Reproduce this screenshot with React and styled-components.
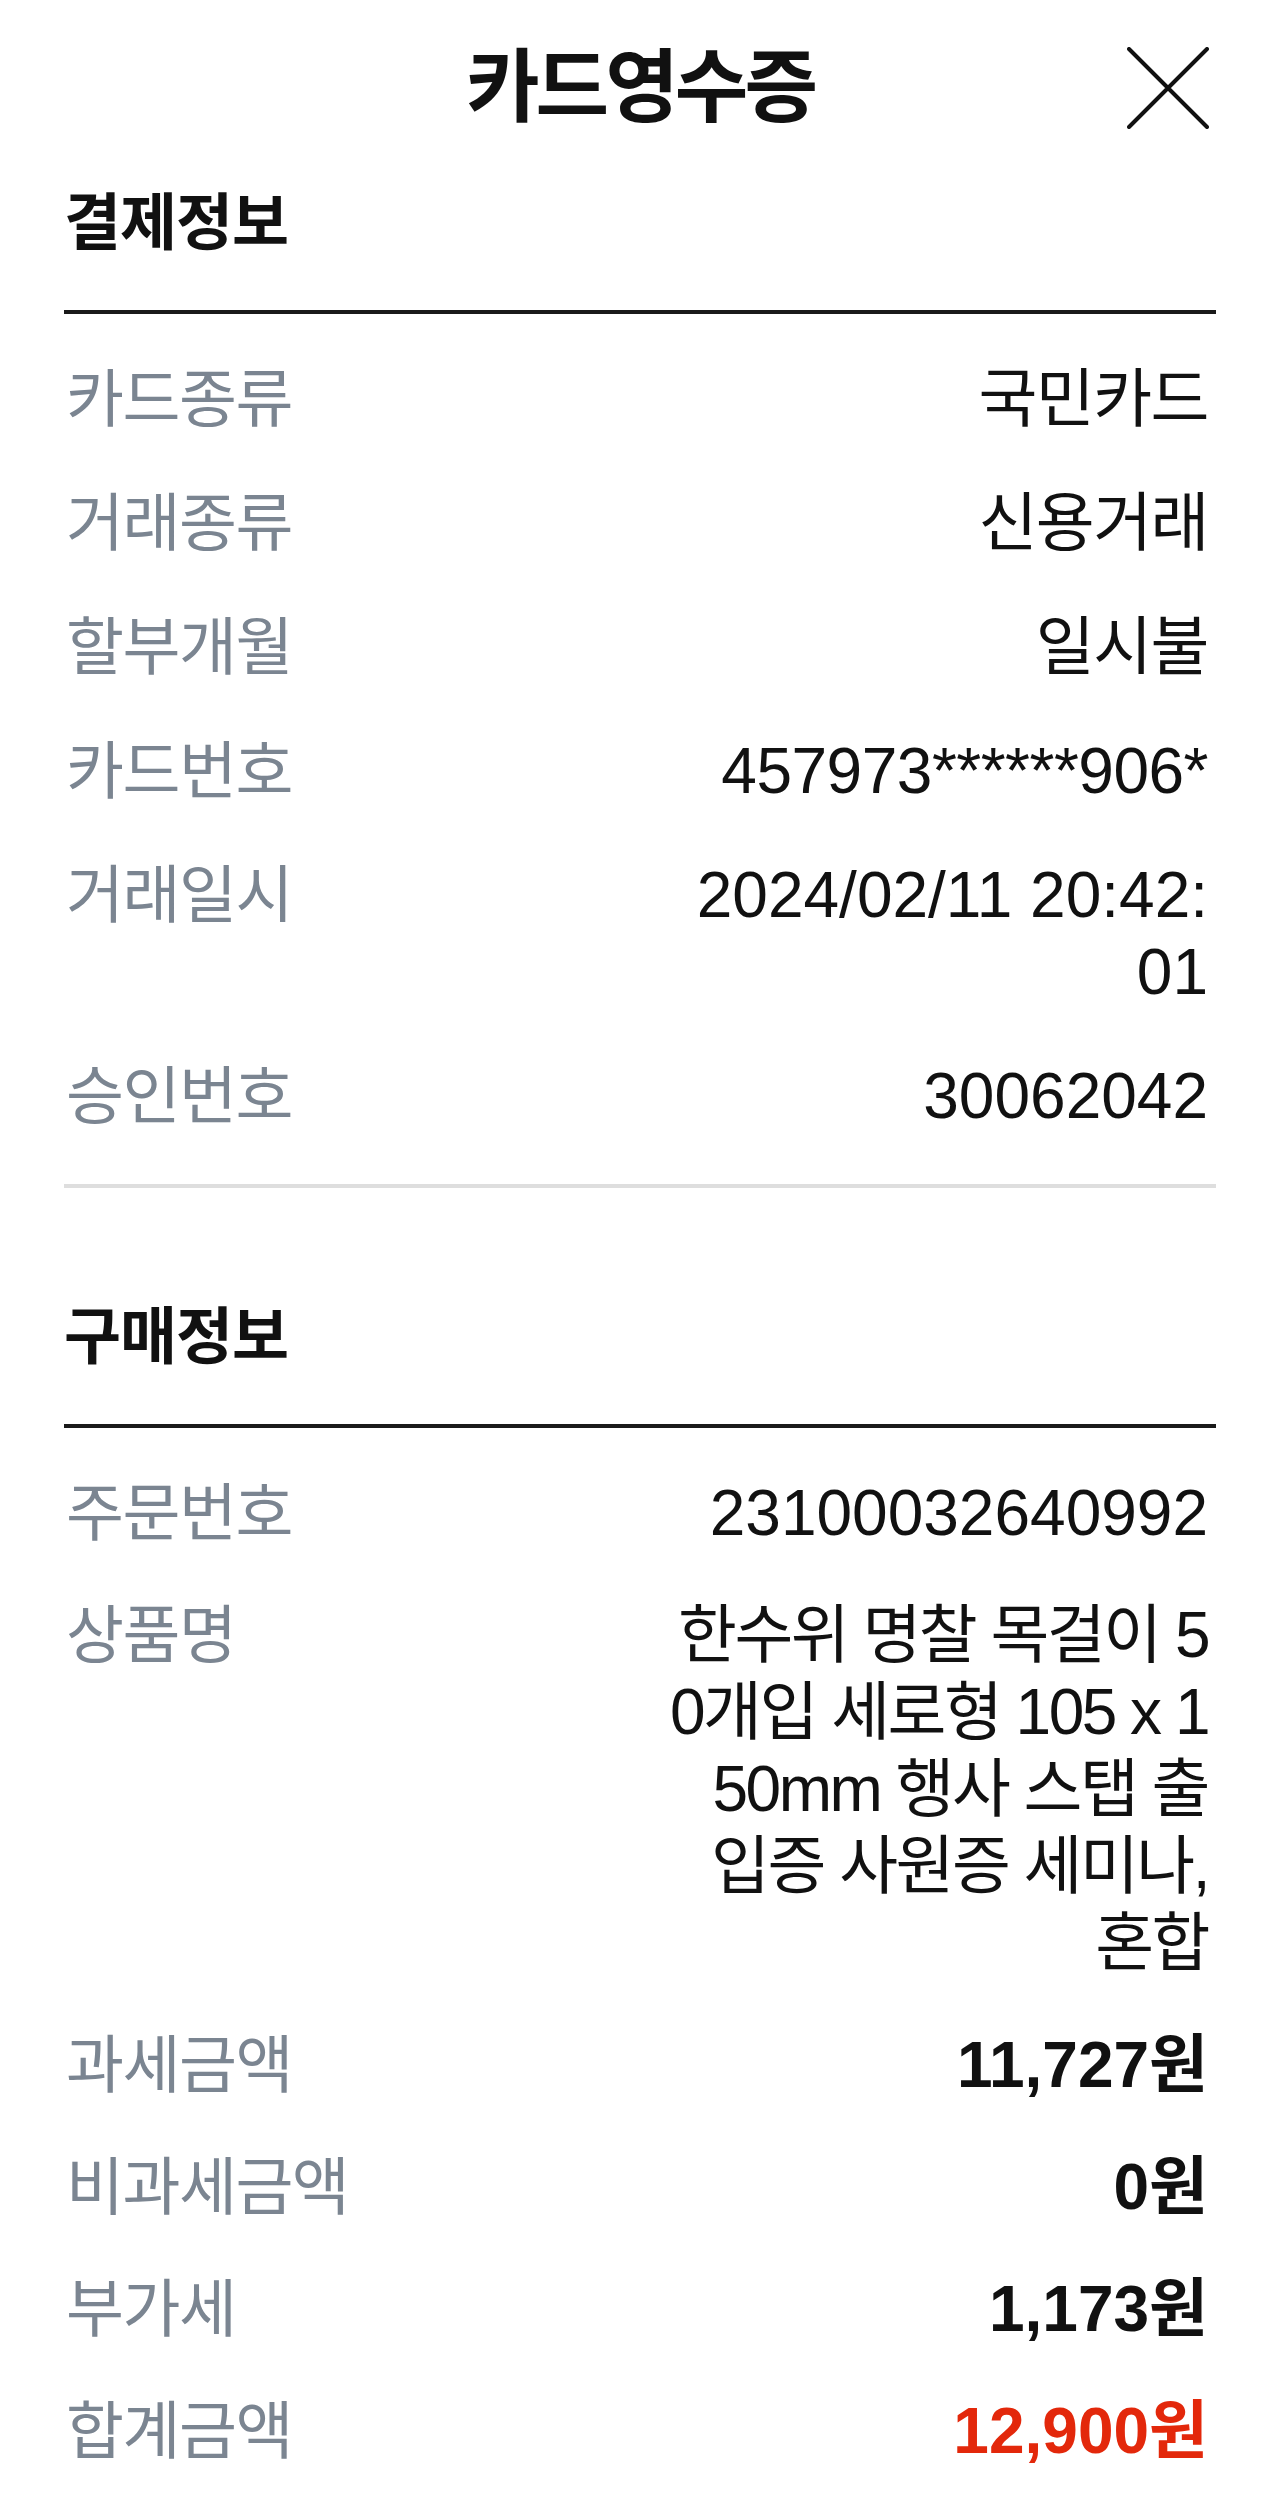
import React from "react";
import styled, { createGlobalStyle } from "styled-components";

const GlobalStyle = createGlobalStyle`
  html, body {
    margin: 0;
    padding: 0;
    background: #ffffff;
  }
  body {
    font-family: "Liberation Sans", "Noto Sans CJK KR", sans-serif;
    color: #111111;
    -webkit-font-smoothing: antialiased;
  }
  * { box-sizing: border-box; }
`;

const Page = styled.div`
  width: 1280px;
  min-height: 2520px;
  background: #ffffff;
  padding: 0 64px;
  display: flex;
  flex-direction: column;
`;

const Header = styled.header`
  height: 176px;
  display: grid;
  grid-template-columns: 1fr auto 1fr;
  align-items: center;
`;

const Title = styled.h1`
  grid-column: 2;
  margin: 0;
  font-size: 80px;
  line-height: 96px;
  font-weight: 700;
  letter-spacing: -4px;
  color: #111111;
`;

const CloseButton = styled.button`
  grid-column: 3;
  justify-self: end;
  width: 82px;
  height: 82px;
  margin-right: 7px;
  padding: 0;
  border: 0;
  background: transparent;
  display: flex;
  align-items: center;
  justify-content: center;
  cursor: pointer;
`;

const Section = styled.section`
  display: flex;
  flex-direction: column;
  margin-top: ${(p) => p.$top}px;
  border-bottom: ${(p) => (p.$divider ? "4px solid #dedede" : "none")};
`;

const SectionTitle = styled.h2`
  margin: 0;
  padding-bottom: 48px;
  border-bottom: 4px solid #1a1a1a;
  font-size: 62px;
  line-height: 77px;
  font-weight: 700;
  letter-spacing: -1px;
  color: #111111;
`;

const List = styled.dl`
  margin: 0;
  padding: 47px 8px ${(p) => p.$bottom}px 2px;
  display: flex;
  flex-direction: column;
  gap: ${(p) => p.$gap}px;
`;

const Row = styled.div`
  display: flex;
  justify-content: space-between;
  align-items: flex-start;
  gap: 40px;
`;

const Label = styled.dt`
  flex: none;
  margin: 0;
  font-size: 63px;
  line-height: 77px;
  letter-spacing: -1.5px;
  color: #7b8591;
  white-space: nowrap;
`;

const Value = styled.dd`
  margin: 0;
  text-align: right;
  font-size: 64px;
  line-height: 77px;
  font-weight: ${(p) => (p.$bold ? 700 : 400)};
  letter-spacing: ${(p) => p.$ls || 0}px;
  color: ${(p) => (p.$accent ? "#e3280b" : "#111111")};
`;

const Line = styled.span`
  display: block;
`;

const CloseIcon = () => (
  <svg width="82" height="82" viewBox="0 0 82 82" fill="none">
    <path d="M2 2 L80 80 M80 2 L2 80" stroke="#111111" strokeWidth="4" strokeLinecap="round" />
  </svg>
);

const paymentRows = [
  { label: "카드종류", lines: ["국민카드"], ls: -1.5 },
  { label: "거래종류", lines: ["신용거래"], ls: -1.5 },
  { label: "할부개월", lines: ["일시불"], ls: -1.5 },
  { label: "카드번호", lines: ["457973******906*"], ls: -0.5 },
  { label: "거래일시", lines: ["2024/02/11 20:42:", "01"] },
  { label: "승인번호", lines: ["30062042"] },
];

const purchaseRows = [
  { label: "주문번호", lines: ["23100032640992"] },
  {
    label: "상품명",
    lines: [
      "한수위 명찰 목걸이 5",
      "0개입 세로형 105 x 1",
      "50mm 행사 스탭 출",
      "입증 사원증 세미나,",
      "혼합",
    ],
    ls: -2.5,
  },
  { label: "과세금액", lines: ["11,727원"], bold: true },
  { label: "비과세금액", lines: ["0원"], bold: true },
  { label: "부가세", lines: ["1,173원"], bold: true },
  { label: "합계금액", lines: ["12,900원"], bold: true, accent: true },
];

const InfoRows = ({ rows }) =>
  rows.map((r) => (
    <Row key={r.label}>
      <Label>{r.label}</Label>
      <Value $bold={r.bold} $accent={r.accent} $ls={r.ls}>
        {r.lines.map((l, i) => (
          <Line key={i}>{l}</Line>
        ))}
      </Value>
    </Row>
  ));

export default function App() {
  return (
    <>
      <GlobalStyle />
      <Page>
        <Header>
          <Title>카드영수증</Title>
          <CloseButton aria-label="닫기">
            <CloseIcon />
          </CloseButton>
        </Header>

        <Section $top={9} $divider>
          <SectionTitle>결제정보</SectionTitle>
          <List $gap={47} $bottom={49}>
            <InfoRows rows={paymentRows} />
          </List>
        </Section>

        <Section $top={111}>
          <SectionTitle>구매정보</SectionTitle>
          <List $gap={45} $bottom={40}>
            <InfoRows rows={purchaseRows} />
          </List>
        </Section>
      </Page>
    </>
  );
}
